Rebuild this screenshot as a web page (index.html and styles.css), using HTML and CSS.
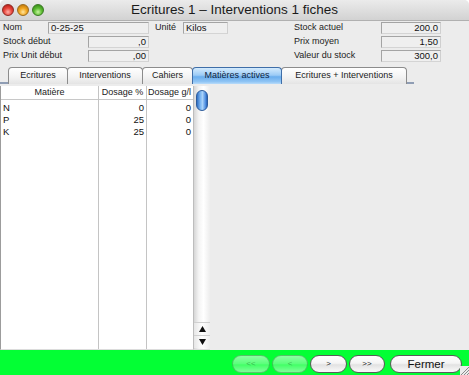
FILE: index.html
```html
<!DOCTYPE html>
<html lang="fr">
<head>
<meta charset="utf-8">
<title>Ecritures 1 – Interventions 1 fiches</title>
<link rel="stylesheet" href="styles.css">
</head>
<body>
<div class="window">
  <div class="titlebar">
    <div class="lights">
      <span class="light red"></span>
      <span class="light yellow"></span>
      <span class="light green"></span>
    </div>
    <div class="title">Ecritures 1 – Interventions 1 fiches</div>
    <div></div>
  </div>

  <div class="form">
    <div class="col-left">
      <div class="row">
        <span class="label l-nom">Nom</span>
        <span class="field w-nom">0-25-25</span>
        <span class="label l-unite">Unité</span>
        <span class="field w-unite">Kilos</span>
      </div>
      <div class="row">
        <span class="label l-wide">Stock début</span>
        <span class="field num w-num">,0</span>
      </div>
      <div class="row">
        <span class="label l-wide">Prix Unit début</span>
        <span class="field num w-num">,00</span>
      </div>
    </div>
    <div class="col-right">
      <div class="row">
        <span class="label l-right">Stock actuel</span>
        <span class="field num w-right">200,0</span>
      </div>
      <div class="row">
        <span class="label l-right">Prix moyen</span>
        <span class="field num w-right">1,50</span>
      </div>
      <div class="row">
        <span class="label l-right">Valeur du stock</span>
        <span class="field num w-right">300,0</span>
      </div>
    </div>
  </div>

  <div class="tabbar">
    <div class="tab t1">Ecritures</div>
    <div class="tab t2">Interventions</div>
    <div class="tab t3">Cahiers</div>
    <div class="tab t4 selected">Matières actives</div>
    <div class="tab t5">Ecritures + Interventions</div>
  </div>

  <div class="content">
    <div class="table">
      <div class="col c1">
        <div class="head">Matière</div>
        <div class="cell left">N</div>
        <div class="cell left">P</div>
        <div class="cell left">K</div>
      </div>
      <div class="col c2">
        <div class="head">Dosage %</div>
        <div class="cell">0</div>
        <div class="cell">25</div>
        <div class="cell">25</div>
      </div>
      <div class="col c3">
        <div class="head">Dosage g/l</div>
        <div class="cell">0</div>
        <div class="cell">0</div>
        <div class="cell">0</div>
      </div>
    </div>
    <div class="scrollbar">
      <div class="thumb"></div>
      <div class="track"></div>
      <div class="arrow up"><svg width="7" height="6" viewBox="0 0 7 6"><polygon points="3.5,0 7,6 0,6" fill="#111"/></svg></div>
      <div class="arrow down"><svg width="7" height="6" viewBox="0 0 7 6"><polygon points="0,0 7,0 3.5,6" fill="#111"/></svg></div>
    </div>
    <div class="filler"></div>
  </div>

  <div class="footer">
    <button class="btn disabled b1">&lt;&lt;</button>
    <button class="btn disabled b2">&lt;</button>
    <button class="btn b3">&gt;</button>
    <button class="btn b4">&gt;&gt;</button>
    <button class="btn fermer">Fermer</button>
    <div class="grip">
      <svg width="9" height="9" viewBox="0 0 9 9">
        <line x1="9" y1="1" x2="1" y2="9" stroke="#8a8a8a" stroke-width="1"/>
        <line x1="9" y1="4" x2="4" y2="9" stroke="#8a8a8a" stroke-width="1"/>
        <line x1="9" y1="7" x2="7" y2="9" stroke="#8a8a8a" stroke-width="1"/>
      </svg>
    </div>
  </div>
</div>
</body>
</html>
```

FILE: styles.css
```css
html, body {
  margin: 0;
  padding: 0;
}
body {
  font-family: "Liberation Sans", Arial, sans-serif;
  font-size: 9px;
  color: #111;
  background: #ffffff;
}
.window {
  width: 469px;
  height: 375px;
  display: flex;
  flex-direction: column;
  background: #ececec;
  overflow: hidden;
  border-radius: 5px 5px 0 0;
}

/* title bar */
.titlebar {
  flex: none;
  height: 21px;
  box-sizing: border-box;
  display: grid;
  grid-template-columns: 1fr auto 1fr;
  align-items: center;
  background: linear-gradient(#ebebeb, #d2d2d2);
  border-bottom: 1px solid #b0b0b0;
}
.lights {
  display: flex;
  gap: 3px;
  padding-left: 2px;
  margin-top: -1px;
}
.light {
  width: 12px;
  height: 12px;
  border-radius: 50%;
  box-sizing: border-box;
}
.red {
  background: radial-gradient(circle at 50% 70%, #ffb0a8 0%, #e8463c 45%, #a8120c 100%);
  border: 1px solid #8c2a24;
}
.yellow {
  background: radial-gradient(circle at 50% 70%, #ffe6a0 0%, #f0a41c 45%, #b06a08 100%);
  border: 1px solid #9a6a1c;
}
.green {
  background: radial-gradient(circle at 50% 70%, #c8f4a0 0%, #5cbc32 45%, #2c7a10 100%);
  border: 1px solid #3a7a24;
}
.title {
  font-size: 13.5px;
  color: #1a1a1a;
  white-space: nowrap;
  margin-top: -1px;
}

/* form */
.form {
  flex: none;
  display: flex;
  padding: 1px 0 0 3px;
}
.col-left {
  width: 226px;
}
.col-right {
  margin-left: 65px;
}
.row {
  display: flex;
  height: 14px;
  align-items: flex-start;
}
.label {
  line-height: 11px;
  flex: none;
  white-space: nowrap;
  color: #222;
}
.l-nom { width: 45px; }
.l-unite { width: 28px; margin-left: 6px; }
.l-wide { width: 85px; }
.l-right { width: 87px; }
.field {
  flex: none;
  height: 11px;
  line-height: 10px;
  box-sizing: border-box;
  background: #efefef;
  border: 1px solid #a4a4a4;
  border-right-color: #cfcfcf;
  border-bottom-color: #d4d4d4;
  padding: 0 2px;
  white-space: nowrap;
  font-size: 9.5px;
  color: #111;
}
.row .field { height: 12px; }
.num { text-align: right; }
.w-nom { width: 101px; }
.w-unite { width: 45px; }
.w-num { width: 61px; }
.w-right { width: 60px; }

/* tabs */
.tabbar {
  flex: none;
  display: flex;
  width: 414px;
  height: 17px;
  margin-top: 3px;
  padding-left: 8px;
  box-sizing: border-box;
  border-bottom: 2px solid #8f9db4;
}
.tab {
  height: 17px;
  box-sizing: border-box;
  border: 1px solid #8c8c8c;
  border-bottom: none;
  border-radius: 4px 4px 0 0;
  background: linear-gradient(#ffffff, #f2f2f2 60%, #e4e4e4);
  text-align: center;
  line-height: 15px;
  font-size: 9px;
  color: #1a1a1a;
  margin-right: -1px;
  white-space: nowrap;
}
.t1 { width: 60px; }
.t2 { width: 76px; }
.t3 { width: 51px; }
.t4 { width: 90px; }
.t5 { width: 126px; }
.tab.selected {
  border-color: #3f6ea8;
  background: linear-gradient(#d4ebfd, #9ccbf6 45%, #6aaeee 55%, #8fc4f4 85%, #b9dcfa);
  color: #0e2440;
  position: relative;
  z-index: 1;
}

/* content */
.content {
  flex: 1;
  display: flex;
  margin-top: 2px;
  min-height: 0;
}
.table {
  display: flex;
  width: 193px;
  box-sizing: border-box;
  background: #ffffff;
  border-left: 1px solid #9c9c9c;
  border-bottom: 1px solid #dcdcdc;
}
.col {
  box-sizing: border-box;
  border-right: 1px solid #c4c4c4;
}
.c1 { width: 98px; }
.c2 { width: 48px; }
.c3 { width: 46px; border-right: none; }
.head {
  height: 14px;
  box-sizing: border-box;
  border-bottom: 1px solid #c8c8c8;
  text-align: center;
  line-height: 13px;
  font-size: 9px;
  color: #222;
  white-space: nowrap;
  overflow: hidden;
}
.c3 .head { text-align: left; padding-left: 1px; }
.head + .cell { margin-top: 2px; }
.cell {
  height: 12px;
  line-height: 12px;
  text-align: right;
  padding: 0 2px;
  font-size: 9.5px;
  color: #111;
}
.cell.left { text-align: left; }

.scrollbar {
  width: 17px;
  display: flex;
  flex-direction: column;
  align-items: center;
  box-sizing: border-box;
  background: linear-gradient(90deg, #d6d6d6, #f4f4f4 30%, #ffffff 60%, #ededed);
  border-left: 1px solid #bdbdbd;
  border-bottom: 1px solid #dcdcdc;
}
.thumb {
  margin-top: 4px;
  width: 12px;
  height: 21px;
  border-radius: 6px;
  box-sizing: border-box;
  border: 1px solid #2d5c9c;
  background: linear-gradient(90deg, #2f6fc4, #7fb8f2 35%, #a8d2fa 55%, #4f8ee0 85%, #2a62b4);
}
.track { flex: 1; }
.arrow {
  width: 16px;
  height: 12px;
  display: flex;
  align-items: center;
  justify-content: center;
  border-top: 1px solid #d0d0d0;
  background: linear-gradient(90deg, #e6e6e6, #ffffff 50%, #eeeeee);
}
.arrow.down { margin-bottom: 1px; }

.filler { flex: 1; }

/* footer */
.footer {
  flex: none;
  height: 25px;
  position: relative;
  display: flex;
  align-items: center;
  justify-content: flex-end;
  padding-right: 7px;
  background: #03ff34;
}
.btn {
  height: 18px;
  margin: 2px 0 0 2px;
  padding: 0;
  box-sizing: border-box;
  border: 1px solid #5a5a5a;
  border-radius: 9px;
  background: linear-gradient(#ffffff, #f4f4f4 45%, #e2e2e2 55%, #fafafa);
  font-family: "Liberation Sans", Arial, sans-serif;
  font-size: 8px;
  color: #222;
  line-height: 16px;
}
.b1 { width: 38px; }
.b2 { width: 36px; }
.b3 { width: 37px; }
.b4 { width: 36px; }
.fermer {
  width: 72px;
  margin-left: 5px;
  font-size: 11.5px;
  color: #111;
}
.btn.disabled {
  border-color: rgba(40, 120, 50, 0.45);
  background: linear-gradient(rgba(255,255,255,0.55), rgba(255,255,255,0.35) 50%, rgba(255,255,255,0.25) 55%, rgba(255,255,255,0.5));
  color: rgba(30, 110, 40, 0.5);
}
.grip {
  position: absolute;
  right: 0;
  bottom: 0;
  width: 9px;
  height: 9px;
  background: #ececec;
}
```
